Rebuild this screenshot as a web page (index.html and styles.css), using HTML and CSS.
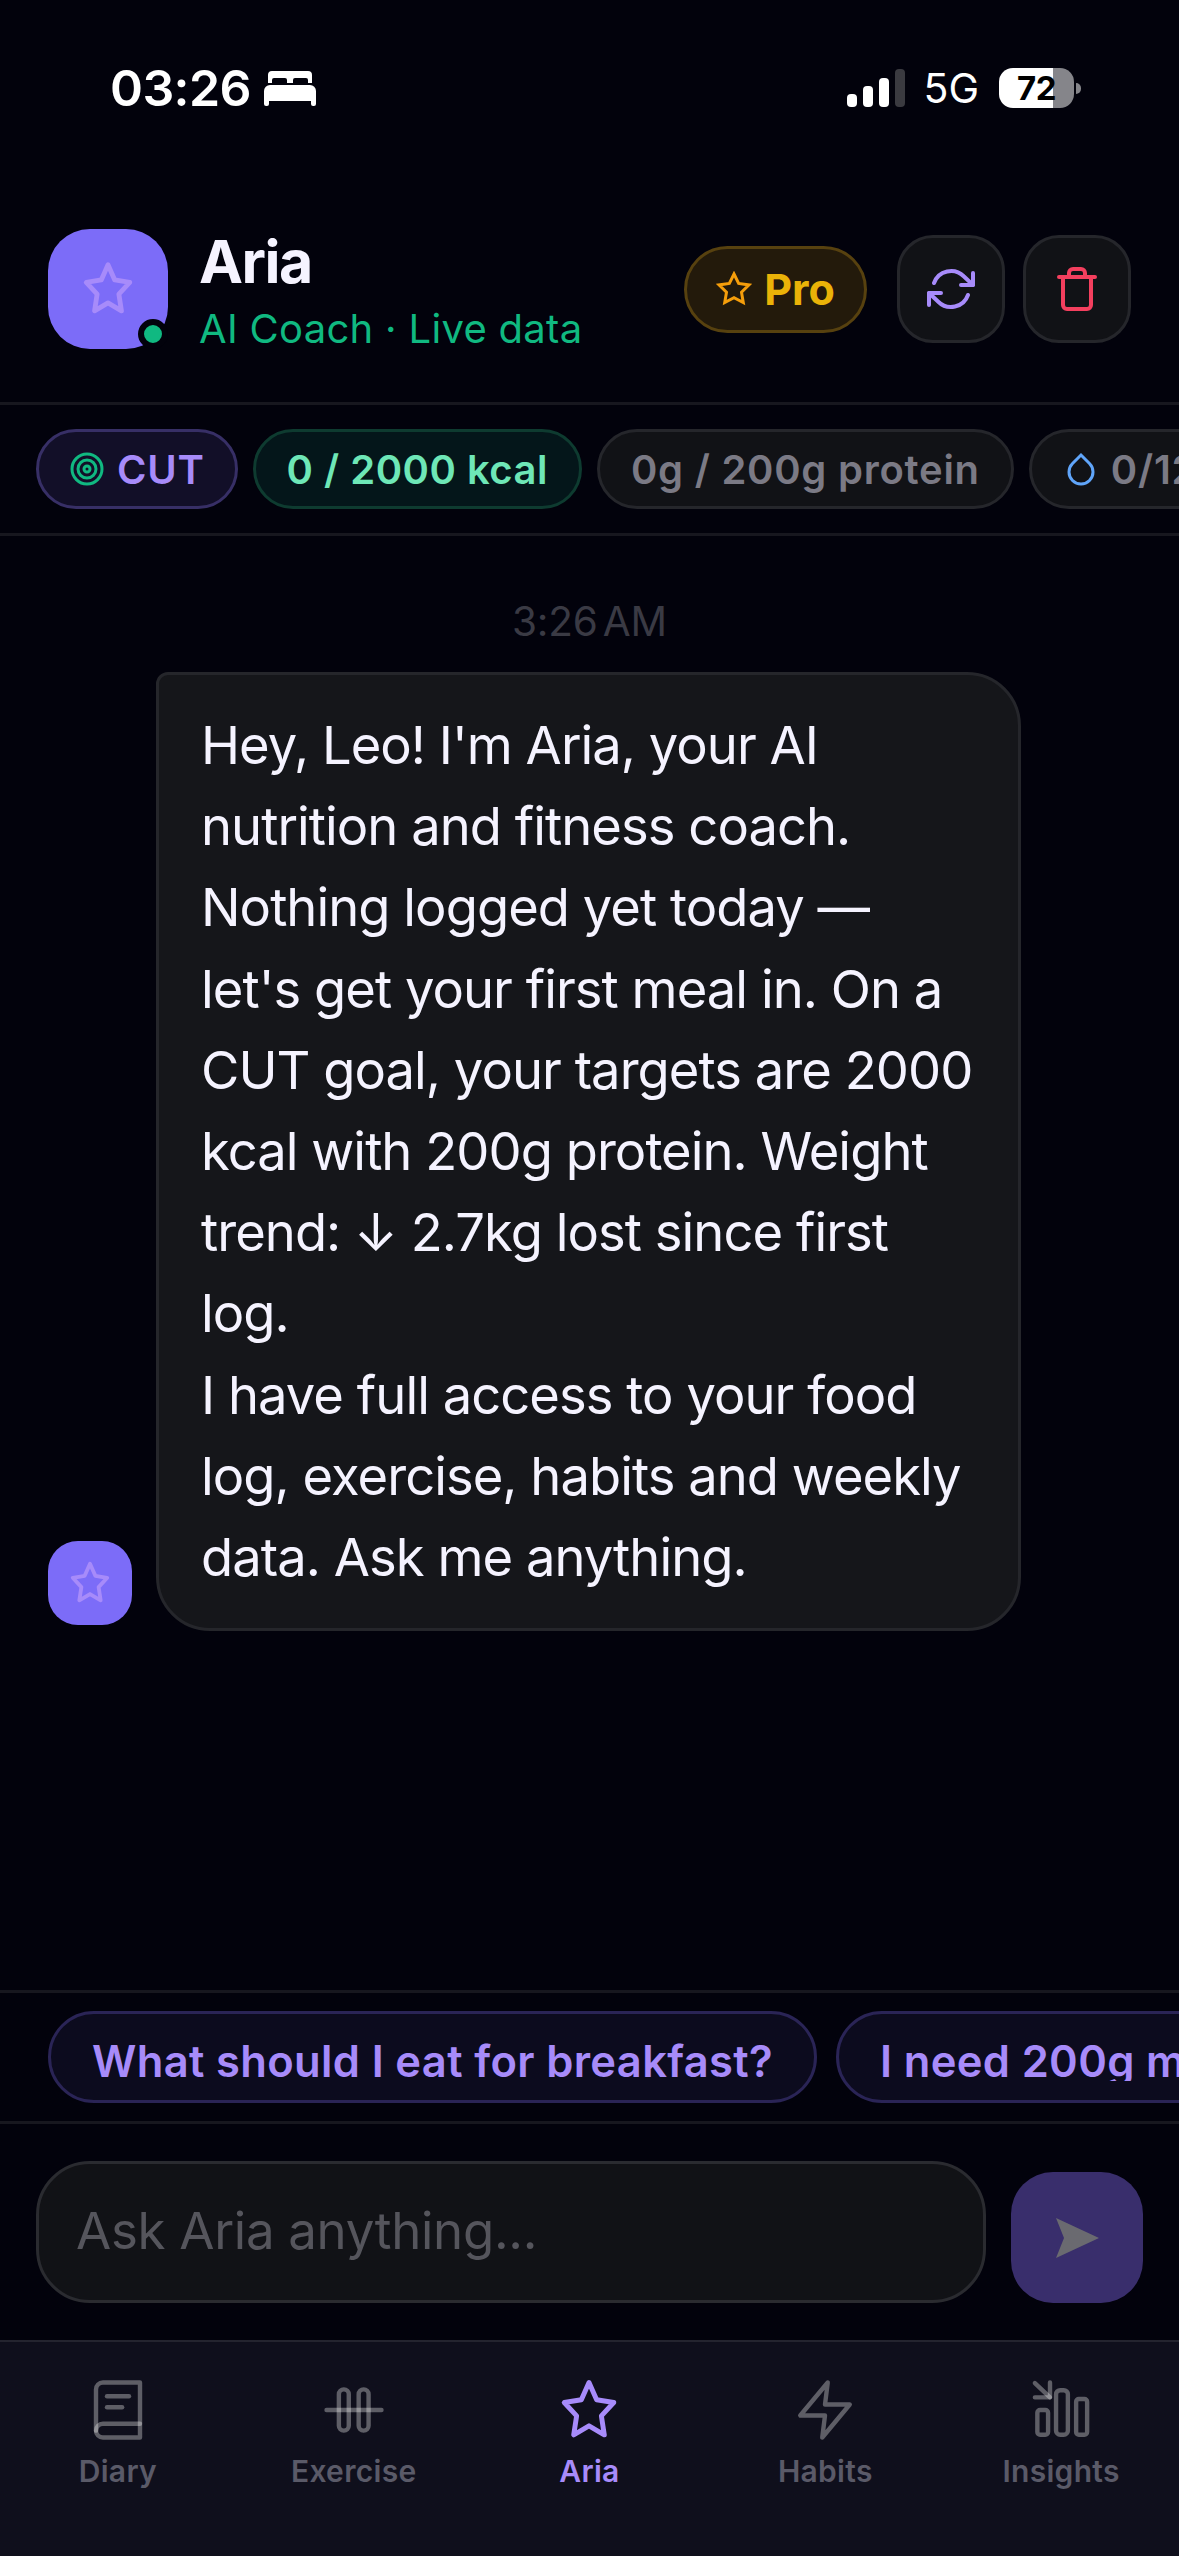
FILE: index.html
```html
<!DOCTYPE html>
<html lang="en">
<head>
    <meta charset="UTF-8">
    <meta name="viewport" content="width=device-width, initial-scale=1.0">
    <title>Aria</title>
    <link rel="stylesheet" href="styles.css">
</head>
<body>
    <div class="page">
        <!-- Status bar -->
        <div class="status">
            <div class="status-left">
                <span class="clock">03:26</span>
                <svg class="bed" viewBox="0 0 52 35"><path d="M8 0h36a4 4 0 0 1 4 4v8h-4V9a2 2 0 0 0-2-2H31a2 2 0 0 0-2 2v3h-6V9a2 2 0 0 0-2-2H10a2 2 0 0 0-2 2v3H4V4a4 4 0 0 1 4-4z" fill="#fff"/><path d="M6 14h40a6 6 0 0 1 6 6v13a2 2 0 0 1-2 2h-1a2 2 0 0 1-2-2v-3H5v3a2 2 0 0 1-2 2H2a2 2 0 0 1-2-2V20a6 6 0 0 1 6-6z" fill="#fff"/></svg>
            </div>
            <div class="status-right">
                <div class="signal">
                    <span class="bar bar1"></span>
                    <span class="bar bar2"></span>
                    <span class="bar bar3"></span>
                    <span class="bar bar4"></span>
                </div>
                <span class="network">5G</span>
                <div class="battery">72</div>
                <span class="battery-nub"></span>
            </div>
        </div>

        <!-- Header -->
        <div class="header">
            <div class="avatar">
                <svg class="avatar-star" viewBox="0 0 24 24"><polygon points="12 2 14.78 8.26 21 9.27 16.5 14.14 17.56 21.02 12 17.77 6.44 21.02 7.5 14.14 3 9.27 9.22 8.26"/></svg>
                <span class="online"></span>
            </div>
            <div class="title">
                <div class="name">Aria</div>
                <div class="subtitle">AI Coach · Live data</div>
            </div>
            <div class="pro">
                <svg class="pro-star" viewBox="0 0 24 24"><polygon points="12 2 15.09 8.26 22 9.27 17 14.14 18.18 21.02 12 17.77 5.82 21.02 7 14.14 2 9.27 8.91 8.26"/></svg>
                <span>Pro</span>
            </div>
            <div class="icon-btn icon-btn-first">
                <svg class="refresh" viewBox="0 0 24 24"><polyline points="23 4 23 10 17 10"/><polyline points="1 20 1 14 7 14"/><path d="M3.51 9a9 9 0 0 1 14.85-3.36L23 10M1 14l4.64 4.36A9 9 0 0 0 20.49 15"/></svg>
            </div>
            <div class="icon-btn">
                <svg class="trash" viewBox="0 0 24 24"><polyline points="3 6 5 6 21 6"/><path d="M19 6v14a2 2 0 0 1-2 2H7a2 2 0 0 1-2-2V6m3 0V4a2 2 0 0 1 2-2h4a2 2 0 0 1 2 2v2"/></svg>
            </div>
        </div>

        <!-- Today's numbers -->
        <div class="stats">
            <div class="chip chip-goal">
                <svg class="chip-icon target" viewBox="0 0 24 24"><circle cx="12" cy="12" r="10"/><circle cx="12" cy="12" r="6"/><circle cx="12" cy="12" r="2"/></svg>
                CUT
            </div>
            <div class="chip chip-kcal">0 / 2000 kcal</div>
            <div class="chip">0g / 200g protein</div>
            <div class="chip">
                <svg class="chip-icon drop" viewBox="0 0 24 24"><path d="M12 2.69l5.66 5.66a8 8 0 1 1-11.31 0z"/></svg>
                0/12 glasses
            </div>
        </div>

        <!-- Chat -->
        <div class="chat">
            <div class="timestamp">3:26 AM</div>
            <div class="message">
                <div class="avatar-small">
                    <svg class="avatar-star" viewBox="0 0 24 24"><polygon points="12 2 14.78 8.26 21 9.27 16.5 14.14 17.56 21.02 12 17.77 6.44 21.02 7.5 14.14 3 9.27 9.22 8.26"/></svg>
                </div>
                <div class="bubble">
                    Hey, Leo! I'm Aria, your AI nutrition and fitness coach. Nothing logged yet today — let's get your first meal in. On a CUT goal, your targets are 2000 kcal with 200g protein. Weight trend: ↓ 2.7kg lost since first log.<br>
                    I have full access to your food log, exercise, habits and weekly data. Ask me anything.
                </div>
            </div>
        </div>

        <!-- Suggestions -->
        <div class="suggestions">
            <div class="suggestion"><span class="suggestion-text">What should I eat for breakfast?</span></div>
            <div class="suggestion"><span class="suggestion-text">I need 200g more protein</span></div>
        </div>

        <!-- Input -->
        <div class="composer">
            <div class="input">Ask Aria anything...</div>
            <div class="send">
                <svg class="send-arrow" viewBox="0 0 43 40"><polygon points="0 0 43 20 0 40 8 20"/></svg>
            </div>
        </div>

        <!-- Tabs -->
        <div class="tabs">
            <div class="tab">
                <svg class="tab-icon" viewBox="0 0 24 24"><path d="M4 19.5A2.5 2.5 0 0 1 6.5 17H20"/><path d="M6.5 2H20v20H6.5A2.5 2.5 0 0 1 4 19.5v-15A2.5 2.5 0 0 1 6.5 2z"/><path d="M8 7h8"/><path d="M8 11h5.5"/></svg>
                <span>Diary</span>
            </div>
            <div class="tab">
                <svg class="tab-icon" viewBox="0 0 24 24"><rect x="6.5" y="4.5" width="3.6" height="15" rx="1.8"/><rect x="13.7" y="4.5" width="3.6" height="15" rx="1.8"/><path d="M2 12h20"/></svg>
                <span>Exercise</span>
            </div>
            <div class="tab tab-active">
                <svg class="tab-icon" viewBox="0 0 24 24"><polygon points="12 2 14.78 8.26 21 9.27 16.5 14.14 17.56 21.02 12 17.77 6.44 21.02 7.5 14.14 3 9.27 9.22 8.26"/></svg>
                <span>Aria</span>
            </div>
            <div class="tab">
                <svg class="tab-icon" viewBox="0 0 24 24"><polygon points="13 2 3 14 12 14 11 22 21 10 12 10 13 2"/></svg>
                <span>Habits</span>
            </div>
            <div class="tab">
                <svg class="tab-icon" viewBox="0 0 24 24"><path d="M2.5 2.2L8 7.4"/><path d="M8 2v5.4H2.5"/><rect x="3.4" y="12" width="3.9" height="9" rx="1"/><rect x="10.2" y="4.8" width="4.3" height="16.2" rx="1.5"/><rect x="17.5" y="8" width="4" height="13" rx="1"/></svg>
                <span>Insights</span>
            </div>
        </div>
    </div>
</body>
</html>
```

FILE: styles.css
```css
body {
    margin: 0;
    background-color: #02020c;
    font-family: Inter, "Noto Sans", sans-serif;
}

.page {
    display: flex;
    flex-direction: column;
    width: 1179px;
    height: 2556px;
    overflow: hidden;
}

/* Status bar */
.status {
    display: flex;
    justify-content: space-between;
    align-items: center;
    flex-shrink: 0;
    height: 176px;
    padding: 0 98px 0 110px;
    box-sizing: border-box;
    color: white;
}

.status-left {
    display: flex;
    align-items: center;
    gap: 13px;
}

.clock {
    font-size: 50px;
    font-weight: 600;
    letter-spacing: -0.6px;
    line-height: 60px;
}

.bed {
    width: 52px;
    height: 35px;
}

.status-right {
    display: flex;
    align-items: center;
}

.signal {
    display: flex;
    align-items: flex-end;
    gap: 6px;
    height: 38px;
}

.bar {
    width: 10px;
    border-radius: 4px;
    background-color: white;
}

.bar1 { height: 13px; }
.bar2 { height: 21px; }
.bar3 { height: 29px; }
.bar4 { height: 38px; background-color: #3a3a40; }

.network {
    margin: 0 20px 0 18px;
    font-size: 41px;
    font-weight: 400;
}

.battery {
    width: 75px;
    height: 40px;
    border-radius: 14px;
    background: linear-gradient(90deg, white 72%, #85858a 72%);
    color: black;
    font-size: 33px;
    font-weight: 700;
    letter-spacing: -0.5px;
    line-height: 40px;
    text-align: center;
}

.battery-nub {
    width: 5px;
    height: 11px;
    margin-left: 2px;
    border-radius: 0 6px 6px 0;
    background-color: #85858a;
}

/* Header */
.header {
    display: flex;
    align-items: center;
    flex-shrink: 0;
    height: 229px;
    padding: 0 48px;
    box-sizing: border-box;
    border-bottom: 3px solid #17171f;
}

.avatar {
    position: relative;
    display: flex;
    justify-content: center;
    align-items: center;
    flex-shrink: 0;
    width: 120px;
    height: 120px;
    border-radius: 42px;
    background-color: #7c6cf8;
}

.avatar-star {
    width: 58px;
    height: 58px;
    fill: none;
    stroke: #a78bfa;
    stroke-width: 2;
    stroke-linejoin: round;
}

.online {
    position: absolute;
    right: 0;
    bottom: 0;
    box-sizing: border-box;
    width: 30px;
    height: 30px;
    border: 6px solid #02020c;
    border-radius: 50%;
    background-color: #10b981;
}

.title {
    flex: 1;
    margin-left: 31px;
    padding-top: 4px;
}

.name {
    color: #f5f3ff;
    font-size: 59px;
    font-weight: 700;
    letter-spacing: -1.5px;
    line-height: 66px;
}

.subtitle {
    margin-top: 10px;
    color: #10b981;
    font-size: 40px;
    letter-spacing: 0.3px;
    line-height: 48px;
}

.pro {
    display: flex;
    justify-content: center;
    align-items: center;
    gap: 12px;
    box-sizing: border-box;
    width: 183px;
    height: 87px;
    border: 3px solid #57410f;
    border-radius: 44px;
    background-color: #231a0b;
    color: #eab308;
    font-size: 43px;
    font-weight: 700;
}

.pro-star {
    width: 36px;
    height: 36px;
    fill: none;
    stroke: #f59e0b;
    stroke-width: 2;
}

.icon-btn {
    display: flex;
    justify-content: center;
    align-items: center;
    box-sizing: border-box;
    width: 108px;
    height: 108px;
    margin-left: 18px;
    border: 3px solid #25262b;
    border-radius: 36px;
    background-color: #111216;
}

.icon-btn-first {
    margin-left: 30px;
}

.icon-btn svg {
    width: 48px;
    height: 48px;
    fill: none;
    stroke-width: 2;
    stroke-linecap: round;
    stroke-linejoin: round;
}

.refresh { stroke: #a78bfa; }
.trash { stroke: #f43f5e; }

/* Stat chips */
.stats {
    display: flex;
    flex-shrink: 0;
    gap: 15px;
    padding: 24px 36px;
    overflow: hidden;
    border-bottom: 3px solid #17171f;
}

.chip {
    display: flex;
    align-items: center;
    flex-shrink: 0;
    gap: 12px;
    box-sizing: border-box;
    height: 80px;
    padding: 0 31px;
    border: 3px solid #25262b;
    border-radius: 40px;
    background-color: #111216;
    color: #7b7a85;
    font-size: 40px;
    font-weight: 600;
    letter-spacing: 0.75px;
    white-space: nowrap;
}

.chip-goal {
    padding: 0 30px;
    border-color: #372f66;
    background-color: #120f28;
    color: #a78bfa;
}

.chip-kcal {
    border-color: #0e3b30;
    background-color: #04161a;
    color: #6ee7b7;
    letter-spacing: 0.5px;
}

.chip-icon {
    width: 36px;
    height: 36px;
    fill: none;
    stroke-width: 2;
}

.target { stroke: #10b981; }
.drop { stroke: #60a5fa; }

/* Chat */
.chat {
    flex: 1;
    padding: 0 48px;
}

.timestamp {
    height: 136px;
    padding-top: 62px;
    box-sizing: border-box;
    color: #3a3a44;
    font-size: 40.5px;
    letter-spacing: -0.2px;
    word-spacing: -6px;
    line-height: 48px;
    text-align: center;
}

.message {
    display: flex;
    align-items: flex-end;
    gap: 24px;
}

.avatar-small {
    display: flex;
    justify-content: center;
    align-items: center;
    flex-shrink: 0;
    width: 84px;
    height: 84px;
    margin-bottom: 6px;
    border-radius: 30px;
    background-color: #7c6cf8;
}

.avatar-small .avatar-star {
    width: 46px;
    height: 46px;
}

.bubble {
    box-sizing: border-box;
    width: 865px;
    padding: 30px 42px;
    border: 3px solid #25262b;
    border-radius: 12px 54px 54px 54px;
    background-color: #15161a;
    color: #f5f3ff;
    font-size: 52.5px;
    letter-spacing: -0.95px;
    line-height: 81.2px;
}

/* Suggestions */
.suggestions {
    display: flex;
    flex-shrink: 0;
    gap: 19px;
    padding: 18px 48px;
    overflow: hidden;
    border-top: 3px solid #17171f;
    border-bottom: 3px solid #17171f;
}

.suggestion {
    flex-shrink: 0;
    box-sizing: border-box;
    height: 92px;
    padding: 0 41px;
    border: 3px solid #2a2456;
    border-radius: 46px;
    background-color: #0c0b1e;
    color: #a78bfa;
    font-size: 43.5px;
    font-weight: 600;
    letter-spacing: 0.35px;
    white-space: nowrap;
}

/* the row is a touch too short in the app, descenders get cut */
.suggestion-text {
    display: block;
    height: 67px;
    overflow: hidden;
    line-height: 94px;
}

/* Composer */
.composer {
    display: flex;
    align-items: flex-end;
    flex-shrink: 0;
    gap: 25px;
    padding: 37px 36px;
}

.input {
    flex: 1;
    box-sizing: border-box;
    height: 142px;
    padding: 0 37px;
    border: 3px solid #2a2b30;
    border-radius: 54px;
    background-color: #111216;
    color: #55555c;
    font-size: 51px;
    letter-spacing: -0.3px;
    line-height: 134px;
}

.send {
    display: flex;
    justify-content: center;
    align-items: center;
    width: 132px;
    height: 131px;
    border-radius: 42px;
    background-color: #392e6c;
}

.send-arrow {
    width: 43px;
    height: 40px;
    fill: #6a6a70;
}

/* Tabs */
.tabs {
    display: grid;
    grid-template-columns: repeat(5, 1fr);
    flex-shrink: 0;
    height: 216px;
    padding-top: 35px;
    box-sizing: border-box;
    border-top: 2px solid #24242f;
    background-color: #0f0f1c;
}

.tab {
    display: flex;
    flex-direction: column;
    align-items: center;
    color: #5a5a68;
    font-size: 30px;
    font-weight: 600;
    letter-spacing: 0.3px;
    line-height: 40px;
}

.tab-icon {
    width: 66px;
    height: 66px;
    margin-bottom: 8px;
    fill: none;
    stroke: rgba(255, 255, 255, 0.33);
    stroke-width: 1.6;
    stroke-linecap: round;
    stroke-linejoin: round;
}

.tab-active {
    color: #a78bfa;
}

.tab-active .tab-icon {
    stroke: #a78bfa;
    stroke-width: 1.8;
}
```
